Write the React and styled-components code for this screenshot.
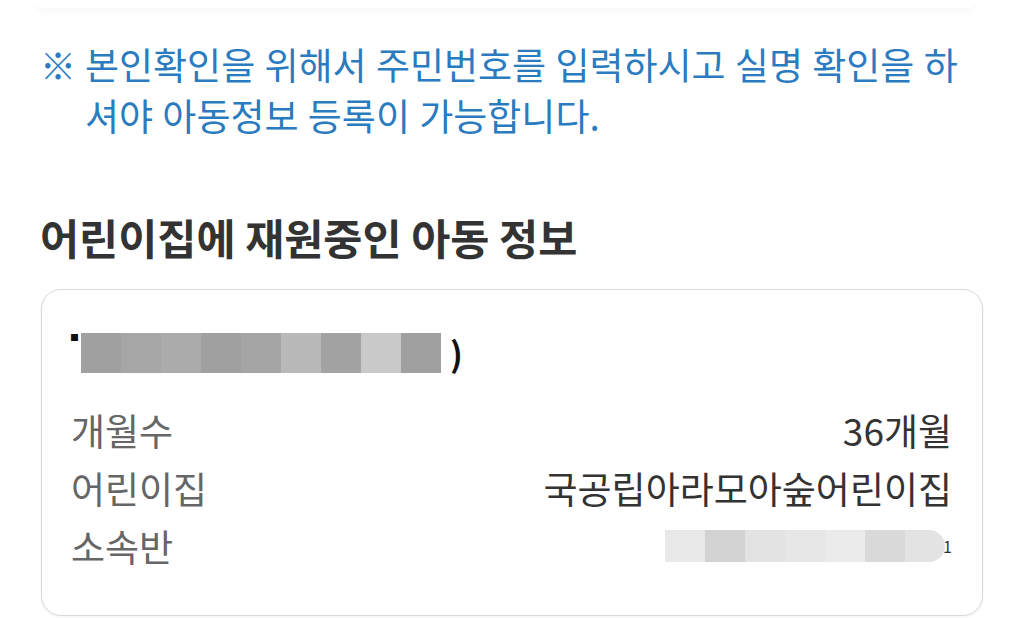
import React from 'react';
import styled, { createGlobalStyle } from 'styled-components';

const GlobalStyle = createGlobalStyle`
  body {
    margin: 0;
    background: #ffffff;
    font-family: "Noto Sans CJK KR", "Noto Sans", sans-serif;
  }
`;

const Page = styled.div`
  width: 1024px;
  height: 618px;
  overflow: hidden;
  padding: 0 41px 0 40px;
  box-sizing: border-box;
`;

const TopCard = styled.div`
  height: 8px;
  margin: 0 8px 0 -4px;
  background: #fff;
  border-radius: 0 0 18px 18px;
  box-shadow: 0 3px 9px rgba(0, 0, 0, 0.04);
`;

const Notice = styled.div`
  display: flex;
  margin-top: 31px;
  color: #2a7bbf;
  font-size: 37px;
  line-height: 51px;
  word-spacing: 1px;
`;

const Mark = styled.span`
  flex: 0 0 45px;
  font-size: 36px;
`;

const Title = styled.h3`
  margin: 70px 0 26px;
  font-size: 42.5px;
  font-weight: 700;
  line-height: 52px;
  color: #333;
`;

const Card = styled.div`
  margin-left: 1px;
  padding: 43px 30px 40px 29px;
  border: 1.5px solid #d9d9d9;
  border-radius: 20px;
  background: #fff;
  box-shadow: 0 1px 3px rgba(0, 0, 0, 0.05);
`;

const NameRow = styled.div`
  display: flex;
  align-items: center;
  height: 40px;
  margin-bottom: 28px;
`;

const Redacted = styled.div`
  position: relative;
  display: flex;
  height: ${(p) => p.$h}px;
  margin-left: ${(p) => p.$offset || 0}px;
`;

const Block = styled.div`
  width: 40px;
  height: 100%;
  background: ${(p) => p.$c};
  &:first-child {
    border-radius: ${(p) => (p.$round ? '16px 0 0 16px' : '0')};
  }
  &:last-child {
    border-radius: ${(p) => (p.$round ? '0 16px 16px 0' : '0')};
  }
`;

const Haze = styled.div`
  position: absolute;
  left: ${(p) => p.$left}px;
  top: ${(p) => p.$top}px;
  width: ${(p) => p.$w}px;
  height: ${(p) => p.$h}px;
  background: ${(p) => p.$c};
  border-radius: ${(p) => p.$r};
  z-index: -1;
`;

const Stray = styled.span`
  font-size: ${(p) => p.$size}px;
  line-height: 1;
  color: #111;
  align-self: ${(p) => p.$align || 'center'};
`;

const Row = styled.div`
  display: flex;
  justify-content: space-between;
  align-items: center;
  height: 58px;
  font-size: 37px;
`;

const Label = styled.span`
  color: #666;
`;

const Value = styled.span`
  display: flex;
  align-items: center;
  color: #333;
`;

const nameBlocks = ['#a0a0a0', '#a6a6a6', '#ababab', '#a0a0a0', '#a5a5a5', '#b9b9b9', '#a3a3a3', '#c9c9c9', '#a0a0a0'];
const classBlocks = ['#e8e8e8', '#d2d2d2', '#e3e3e3', '#e7e7e7', '#ebebeb', '#d9d9d9', '#e3e3e3'];

const App = () => {
  return (
    <Page>
      <GlobalStyle />
      <TopCard />
      <Notice>
        <Mark>※</Mark>
        <span>
          본인확인을 위해서 주민번호를 입력하시고 실명 확인을 하셔야 아동정보 등록이
          가능합니다.
        </span>
      </Notice>
      <Title>어린이집에 재원중인 아동 정보</Title>
      <Card>
        <NameRow>
          <Stray $size={14} $align="flex-start">▘</Stray>
          <Redacted $h={40} $offset={-4}>
            <Haze $left={-20} $top={8} $w={30} $h={30} $c="#e4e4e4" $r="50%" />
            <Haze $left={360} $top={0} $w={18} $h={40} $c="#dedede" $r="0 10px 10px 0" />
            {nameBlocks.map((c, i) => (
              <Block key={i} $c={c} />
            ))}
          </Redacted>
          <Stray $size={34} style={{ marginLeft: 9, fontWeight: 700 }}>)</Stray>
        </NameRow>
        <Row>
          <Label>개월수</Label>
          <Value>36개월</Value>
        </Row>
        <Row>
          <Label>어린이집</Label>
          <Value>국공립아라모아숲어린이집</Value>
        </Row>
        <Row>
          <Label>소속반</Label>
          <Value>
            <Redacted $h={32} $offset={0}>
              <Haze $left={30} $top={-20} $w={240} $h={30} $c="#f2f2f2" $r="60% 40% 0 0" />
              {classBlocks.map((c, i) => (
                <Block key={i} $c={c} $round />
              ))}
            </Redacted>
            <Stray $size={16} style={{ color: '#333', marginLeft: -2 }}>1</Stray>
          </Value>
        </Row>
      </Card>
    </Page>
  );
};

export default App;
